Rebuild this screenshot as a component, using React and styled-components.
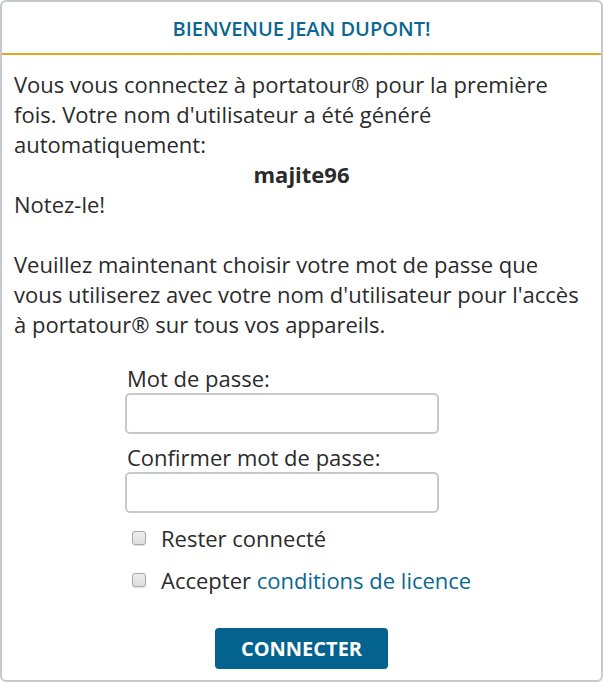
import React from "react";
import styled, { createGlobalStyle } from "styled-components";

const Global = createGlobalStyle`
  html, body { margin: 0; padding: 0; background: #fff; }
  body { font-family: "Open Sans", "Noto Sans", sans-serif; color: #2b2b2b; }
  * { box-sizing: border-box; }
`;

const Card = styled.div`
  width: 603px;
  height: 682px;
  border: 2px solid #c6cacd;
  border-radius: 6px;
  background: #fff;
  display: flex;
  flex-direction: column;
  overflow: hidden;
`;

const Header = styled.div`
  height: 53px;
  border-bottom: 2px solid #e0a920;
  display: flex;
  align-items: center;
  justify-content: center;
  color: #0b6792;
  font-weight: 600;
  font-size: 20px;
  text-transform: uppercase;
  padding-top: 2px;
`;

const Body = styled.div`
  padding: 14px 10px 0 12px;
  font-size: 22px;
  line-height: 30px;
  display: flex;
  flex-direction: column;
`;

const Para = styled.p`
  margin: 0;
`;

const Username = styled.div`
  text-align: center;
  font-weight: 700;
  padding-right: 2px;
`;

const Spacer = styled.div`
  height: 30px;
`;

const Form = styled.div`
  width: 354px;
  margin: 24px 0 0 111px;
  display: flex;
  flex-direction: column;
`;

const Label = styled.label`
  display: block;
  padding-left: 2px;
  margin-top: ${(p) => (p.$first ? "0" : "8px")};
`;

const Input = styled.input`
  display: block;
  width: 314px;
  height: 41px;
  border: 2px solid #c8c9cb;
  border-radius: 5px;
  background: #fff;
  outline: none;
  font: inherit;
  padding: 0 8px;
`;

const CheckRow = styled.div`
  display: flex;
  align-items: center;
  height: 30px;
  margin-top: ${(p) => p.$mt}px;
  padding-left: 7px;
  white-space: nowrap;
`;

const Box = styled.span`
  width: 14px;
  height: 14px;
  border: 1px solid #a9a9a9;
  border-radius: 3px;
  background: linear-gradient(#eeeeee, #dedede);
  box-shadow: 0 1px 1px rgba(0, 0, 0, 0.12);
  margin-right: 15px;
  flex: none;
`;

const Link = styled.a`
  color: #0b6792;
  text-decoration: none;
`;

const ButtonRow = styled.div`
  display: flex;
  justify-content: center;
  margin-top: 33px;
  padding-right: 2px;
`;

const Button = styled.button`
  width: 173px;
  height: 41px;
  border: none;
  border-radius: 4px;
  background: #03638e;
  color: #fff;
  font-family: "Open Sans", sans-serif;
  font-weight: 700;
  font-size: 20px;
  text-transform: uppercase;
  padding: 0;
  cursor: pointer;
`;

export default function App() {
  return (
    <>
      <Global />
      <Card>
        <Header>Bienvenue Jean Dupont!</Header>
        <Body>
          <Para>
            Vous vous connectez à portatour® pour la première fois. Votre nom
            d'utilisateur a été généré automatiquement:
          </Para>
          <Username>majite96</Username>
          <Para>Notez-le!</Para>
          <Spacer />
          <Para>
            Veuillez maintenant choisir votre mot de passe que vous utiliserez
            avec votre nom d'utilisateur pour l'accès à portatour® sur tous vos
            appareils.
          </Para>
          <Form>
            <Label $first>Mot de passe:</Label>
            <Input type="password" />
            <Label>Confirmer mot de passe:</Label>
            <Input type="password" />
            <CheckRow $mt={10}>
              <Box />
              <span>Rester connecté</span>
            </CheckRow>
            <CheckRow $mt={12}>
              <Box />
              <span>
                Accepter <Link href="#">conditions de licence</Link>
              </span>
            </CheckRow>
          </Form>
          <ButtonRow>
            <Button>Connecter</Button>
          </ButtonRow>
        </Body>
      </Card>
    </>
  );
}
